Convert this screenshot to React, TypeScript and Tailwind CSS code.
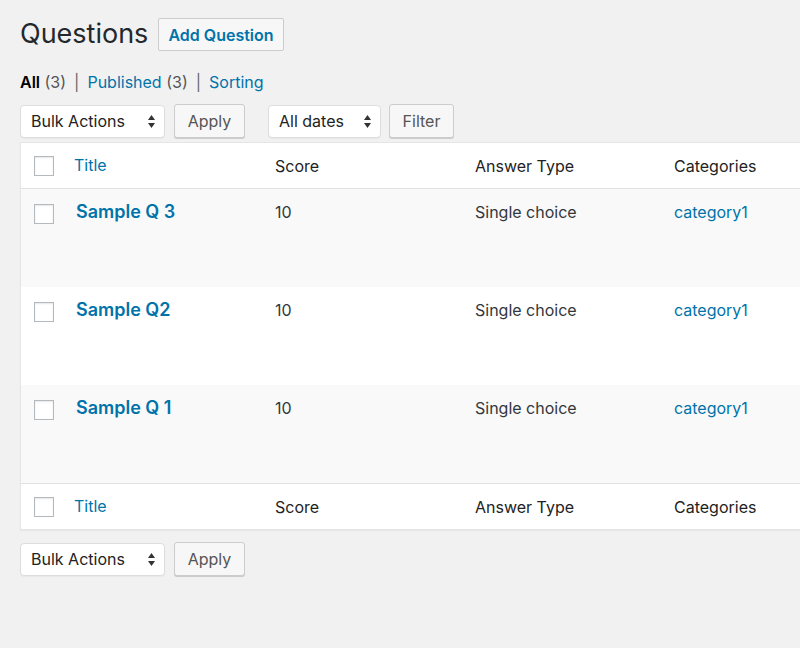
import React from "react";

const rows = [
  { title: "Sample Q 3", score: "10", type: "Single choice", cat: "category1" },
  { title: "Sample Q2", score: "10", type: "Single choice", cat: "category1" },
  { title: "Sample Q 1", score: "10", type: "Single choice", cat: "category1" },
];

function Checkbox() {
  return (
    <span className="block w-[20px] h-[20px] border border-[#b4b9be] bg-white shadow-[inset_0_1px_2px_rgba(0,0,0,0.1)]" />
  );
}

function Select({ label, width }: { label: string; width: string }) {
  return (
    <div
      className={`${width} h-[33px] flex items-center justify-between pl-[10px] pr-[8px] bg-white border border-[#ddd] rounded-[4px] shadow-[0_1px_1px_rgba(0,0,0,0.04)] text-[16px] text-[#222]`}
    >
      <span>{label}</span>
      <svg width="9" height="15" viewBox="0 0 9 15">
        <path d="M4.5 1 L8 6 H1 Z" fill="#333" />
        <path d="M4.5 14 L8 9 H1 Z" fill="#333" />
      </svg>
    </div>
  );
}

function Button({ label, width }: { label: string; width: string }) {
  return (
    <button
      className={`${width} h-[34px] bg-[#f7f7f7] border border-[#ccc] rounded-[3px] shadow-[0_1px_0_#ccc] text-[16px] text-[#555] flex items-center justify-center`}
    >
      {label}
    </button>
  );
}

function HeadRow({ top }: { top?: boolean }) {
  return (
    <div
      className={`flex h-[46px] bg-white ${top ? "border-b" : "border-t"} border-[#e1e1e1] text-[16px] text-[#222]`}
    >
      <div className="w-[42px] pl-[13px] pt-[13px]">
        <Checkbox />
      </div>
      <div className="w-[200px] pl-[11px] pt-[10px] text-[#0073aa]">Title</div>
      <div className="w-[200px] pl-[12px] pt-[11px]">Score</div>
      <div className="w-[199px] pl-[12px] pt-[11px]">Answer Type</div>
      <div className="w-[200px] pl-[12px] pt-[11px]">Categories</div>
    </div>
  );
}

export default function App() {
  return (
    <div
      className="w-[800px] h-[648px] overflow-hidden bg-[#f1f1f1] pl-[20px] pt-[14px]"
      style={{ fontFamily: "Inter, 'Liberation Sans', sans-serif" }}
    >
      <div className="flex items-center gap-[10px]">
        <h1 className="text-[27px] text-[#23282d] font-normal leading-[40px]">Questions</h1>
        <button className="h-[33px] px-[9px] bg-[#f7f7f7] border border-[#ccc] rounded-[2px] text-[16px] font-semibold text-[#0073aa] mt-[1px]">
          Add Question
        </button>
      </div>

      <div className="mt-[18px] text-[16px] text-[#555] flex gap-[8px] leading-[20px]">
        <span>
          <span className="font-semibold text-black">All</span> (3)
        </span>
        <span className="text-[#666]">|</span>
        <span>
          <span className="text-[#0073aa]">Published</span> (3)
        </span>
        <span className="text-[#666]">|</span>
        <span className="text-[#0073aa]">Sorting</span>
      </div>

      <div className="mt-[12px] flex items-center">
        <Select label="Bulk Actions" width="w-[145px]" />
        <div className="ml-[9px]">
          <Button label="Apply" width="w-[71px]" />
        </div>
        <div className="ml-[23px]">
          <Select label="All dates" width="w-[113px]" />
        </div>
        <div className="ml-[8px]">
          <Button label="Filter" width="w-[65px]" />
        </div>
      </div>

      <div className="mt-[4px] w-[900px] border border-[#e5e5e5] shadow-[0_1px_1px_rgba(0,0,0,0.04)] bg-white">
        <HeadRow top />
        {rows.map((r, i) => (
          <div
            key={r.title}
            className={`flex h-[98px] ${i % 2 === 0 ? "bg-[#f9f9f9]" : "bg-white"} text-[16px] text-[#32373c]`}
          >
            <div className="w-[42px] pl-[13px] pt-[15px]">
              <Checkbox />
            </div>
            <div className="w-[200px] pl-[13px] pt-[9px] text-[18px] font-semibold text-[#0073aa]">
              {r.title}
            </div>
            <div className="w-[200px] pl-[12px] pt-[11px]">{r.score}</div>
            <div className="w-[199px] pl-[12px] pt-[11px]">{r.type}</div>
            <div className="w-[200px] pl-[12px] pt-[11px] text-[#0073aa]">{r.cat}</div>
          </div>
        ))}
        <HeadRow />
      </div>

      <div className="mt-[12px] flex items-center">
        <Select label="Bulk Actions" width="w-[145px]" />
        <div className="ml-[9px]">
          <Button label="Apply" width="w-[71px]" />
        </div>
      </div>
    </div>
  );
}
